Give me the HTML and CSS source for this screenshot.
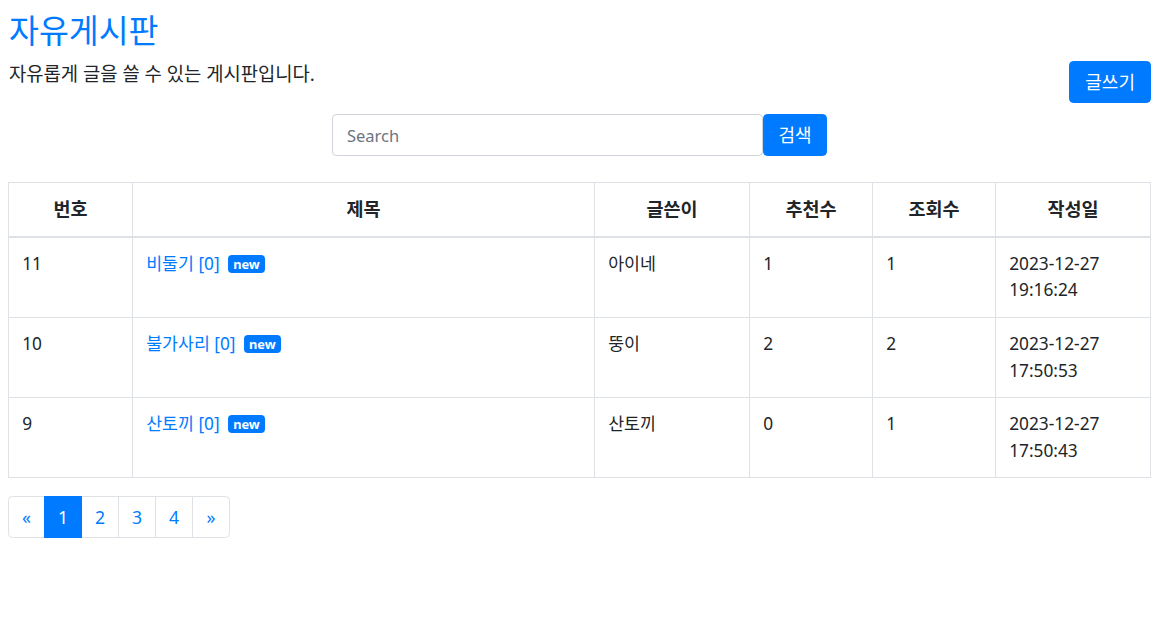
FILE: index.html
```html
<!DOCTYPE html>
<html lang="ko">
<head>
  <meta charset="UTF-8">
  <title>자유게시판</title>
  <link rel="stylesheet" href="styles.css">
</head>
<body>

<div class="board">
  <h2 class="board-title">자유게시판</h2>
  <div class="board-head">
    <p class="board-desc">자유롭게 글을 쓸 수 있는 게시판입니다.</p>
    <a class="btn btn-primary" href="#">글쓰기</a>
  </div>

  <form class="search">
    <input type="text" class="search-input" placeholder="Search">
    <button type="submit" class="btn btn-primary">검색</button>
  </form>

  <table class="list">
    <colgroup>
      <col class="c-no">
      <col class="c-title">
      <col class="c-writer">
      <col class="c-like">
      <col class="c-view">
      <col>
    </colgroup>
    <thead>
      <tr>
        <th>번호</th>
        <th>제목</th>
        <th>글쓴이</th>
        <th>추천수</th>
        <th>조회수</th>
        <th>작성일</th>
      </tr>
    </thead>
    <tbody>
      <tr>
        <td>11</td>
        <td><a href="#">비둘기 [0]</a> <span class="badge">new</span></td>
        <td>아이네</td>
        <td>1</td>
        <td>1</td>
        <td>2023-12-27<br>19:16:24</td>
      </tr>
      <tr>
        <td>10</td>
        <td><a href="#">불가사리 [0]</a> <span class="badge">new</span></td>
        <td>뚱이</td>
        <td>2</td>
        <td>2</td>
        <td>2023-12-27<br>17:50:53</td>
      </tr>
      <tr>
        <td>9</td>
        <td><a href="#">산토끼 [0]</a> <span class="badge">new</span></td>
        <td>산토끼</td>
        <td>0</td>
        <td>1</td>
        <td>2023-12-27<br>17:50:43</td>
      </tr>
    </tbody>
  </table>

  <ul class="pagination">
    <li><a href="#">&laquo;</a></li>
    <li class="active"><a href="#">1</a></li>
    <li><a href="#">2</a></li>
    <li><a href="#">3</a></li>
    <li><a href="#">4</a></li>
    <li><a href="#">&raquo;</a></li>
  </ul>
</div>

</body>
</html>
```

FILE: styles.css
```css
body {
  margin: 8px 7px 8px 8px;
  font-family: "Noto Sans", "Noto Sans CJK KR", sans-serif;
  font-size: 17.6px;
  line-height: 26.4px;
  color: #212529;
  background: #fff;
}

a { color: #007bff; text-decoration: none; }

.board-title {
  margin: 0 0 9px 0;
  padding: 2px 0 0 1px;
  font-size: 32.5px;
  font-weight: 400;
  line-height: 42px;
  color: #007bff;
}

.board-head {
  display: flex;
  justify-content: space-between;
  align-items: flex-start;
}

.board-desc {
  margin: 0;
  padding-left: 1px;
  font-size: 18.8px;
}

.btn {
  display: inline-block;
  height: 42px;
  line-height: 40px;
  padding: 0 15px;
  border: 1px solid #007bff;
  border-radius: 4.4px;
  font-family: inherit;
  font-size: 18px;
  box-sizing: border-box;
  cursor: pointer;
}

.btn-primary { background: #007bff; color: #fff; }

.search {
  display: flex;
  justify-content: center;
  margin: 11px 0 26px 0;
}

.search-input {
  width: 431px;
  height: 42px;
  box-sizing: border-box;
  padding: 0 14px;
  border: 1px solid #ced4da;
  border-radius: 4.4px;
  font-family: inherit;
  font-size: 16.5px;
  color: #495057;
  outline: none;
}

.search-input::placeholder { color: #6c757d; }

.search .btn { width: 64px; padding: 0; }

.list {
  width: 100%;
  border-collapse: collapse;
  table-layout: fixed;
  margin-bottom: 18px;
}

.c-no { width: 124px; }
.c-title { width: 462px; }
.c-writer { width: 155px; }
.c-like { width: 123px; }
.c-view { width: 123px; }

.list th,
.list td {
  border: 1px solid #dee2e6;
  padding: 13.2px;
  vertical-align: top;
  text-align: left;
}

.list th {
  text-align: center;
  font-weight: 700;
  font-size: 18.5px;
  border-bottom-width: 2px;
  padding-top: 13.2px;
}

.list td { font-size: 17.3px; }

.badge {
  display: inline-block;
  padding: 1px 5px;
  font-size: 12.8px;
  font-weight: 700;
  line-height: 16px;
  color: #fff;
  background: #007bff;
  border-radius: 4px;
  vertical-align: 1px;
  margin-left: 4px;
}

.pagination {
  display: flex;
  list-style: none;
  margin: 0;
  padding: 0;
}

.pagination a {
  display: block;
  width: 38px;
  height: 42px;
  line-height: 40px;
  box-sizing: border-box;
  text-align: center;
  border: 1px solid #dee2e6;
  margin-left: -1px;
  font-size: 17.6px;
  color: #007bff;
  background: #fff;
}

.pagination li:first-child a {
  margin-left: 0;
  width: 37px;
  border-radius: 4.4px 0 0 4.4px;
}

.pagination li:last-child a { border-radius: 0 4.4px 4.4px 0; }

.pagination .active a {
  background: #007bff;
  border-color: #007bff;
  color: #fff;
  position: relative;
  z-index: 1;
}
```
